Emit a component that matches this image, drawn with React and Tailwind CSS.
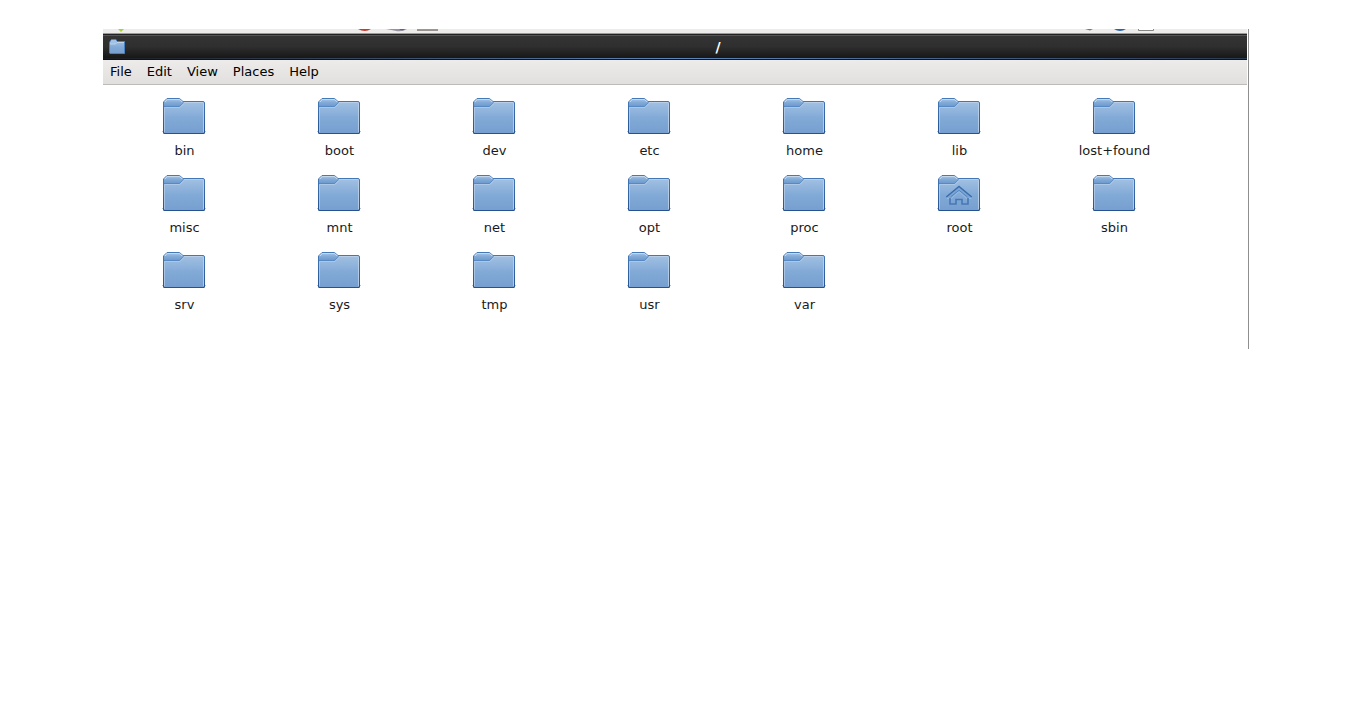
const menus = ['File', 'Edit', 'View', 'Places', 'Help'];

const folders = [
  'bin', 'boot', 'dev', 'etc', 'home', 'lib', 'lost+found',
  'misc', 'mnt', 'net', 'opt', 'proc', 'root', 'sbin',
  'srv', 'sys', 'tmp', 'usr', 'var',
];

function FolderDefs() {
  return (
    <svg className="absolute size-0" aria-hidden="true">
      <defs>
        <linearGradient id="body" x1="0" y1="0" x2="0" y2="1">
          <stop offset="0" stopColor="#a9c5e4" />
          <stop offset="0.55" stopColor="#82aad7" />
          <stop offset="1" stopColor="#769fd0" />
        </linearGradient>
        <linearGradient id="tab" x1="0" y1="0" x2="0" y2="1">
          <stop offset="0" stopColor="#a9c6e6" />
          <stop offset="0.4" stopColor="#86add8" />
          <stop offset="1" stopColor="#6a98cd" />
        </linearGradient>
        <linearGradient id="edge" x1="0" y1="0" x2="0" y2="1">
          <stop offset="0" stopColor="#457ab9" />
          <stop offset="1" stopColor="#265290" />
        </linearGradient>
      </defs>
    </svg>
  );
}

function FolderIcon({ home }) {
  return (
    <svg className="h-12 w-[47px]" viewBox="0 0 47 48" aria-hidden="true">
      <path d="M1 39.5H45" stroke="#b9c2cf" strokeWidth="1" />
      <path
        d="M2.5 41V10L6 6.5H18.500L22 9.5H42Q43.500 9.500 43.500 11V41Q43.500 41.500 43 41.500H3Q2.500 41.500 2.500 41Z"
        fill="url(#body)"
        stroke="url(#edge)"
      />
      <path d="M42.500 40V11.500Q42.500 10.500 41.500 10.500H23" fill="none" stroke="#bdd3ec" strokeOpacity="0.8" />
      <path d="M3 9.800L6 7H18.500L22.500 10L18.500 14.500H3Z" fill="url(#tab)" />
      <path d="M4 10L6.300 7.500H18.300L21 9.800" fill="none" stroke="#c4d8ee" />
      <path d="M3.500 40V15.500H19L23 11.500" fill="none" stroke="#b3cce9" strokeOpacity="0.8" />
      <path d="M3 14.500H18.500L22.500 10.300" fill="none" stroke="#4a7fbf" strokeOpacity="0.75" />
      {home && (
        <>
          <path d="M11 29.500H15.500L23 22.500L30.500 29.500H35.500" fill="none" stroke="#a9c6e6" strokeOpacity="0.6" />
          <path d="M10.800 28L23 17.800L35.200 28H31.500L23 21.300L14.500 28Z" fill="#7ba5d5" />
          <path d="M14.500 28L23 21.300L31.500 28" fill="none" stroke="#5585c0" />
          <path d="M10.300 28L23 17.500L35.700 28" fill="none" stroke="#3a6dac" strokeWidth="1.500" />
          <path d="M14 29V35H20V30.500H26V35H32V29" fill="none" stroke="#4778b5" strokeWidth="1.600" />
        </>
      )}
    </svg>
  );
}

function SmallFolder() {
  return (
    <svg className="size-4" viewBox="0 0 16 16" aria-hidden="true">
      <path d="M0.500 14V3.500L2.500 0.500H7L8 2.500H15.500V14.500H1Z" fill="url(#body)" stroke="#4a7fc0" />
      <path d="M1 3.500L2.500 1H6.500L8 2.500L6.500 4.500H1Z" fill="#a3c2e4" />
      <path d="M1 5H6.500L8 3.500H15" fill="none" stroke="#dbe8f6" strokeOpacity="0.6" />
    </svg>
  );
}

/* The lower edge of the desktop panel, with the bottoms of its launchers. */
function PanelEdge() {
  return (
    <div className="flex h-[5px] items-start justify-between overflow-hidden border-b border-[#9c9b99] bg-[#edeceb] pr-[91px] pl-[14px]">
      <div className="flex">
        <svg className="h-1 w-2" viewBox="0 0 8 4" aria-hidden="true">
          <path d="M1 0H7L4 3Z" fill="#a5d334" />
        </svg>
        <svg className="ml-[233px] h-1 w-[84px]" viewBox="0 0 84 4" aria-hidden="true">
          <path d="M0 0H13Q7 4 0 0Z" fill="#c93a2a" />
          <path d="M28 0H49Q44 3.500 37 1.800Z" fill="#98939f" />
          <path d="M41 0H47Q44 2.500 41 0Z" fill="#7b4f96" />
          <path d="M59 0.500H80" stroke="#c98a55" />
          <path d="M59 1.500H80" stroke="#97918f" />
        </svg>
      </div>
      <svg className="h-1 w-[72px]" viewBox="0 0 72 4" aria-hidden="true">
        <path d="M1 0H9L6 1.500Z" fill="#777" />
        <path d="M30 0H42Q36 4 30 0Z" fill="#2b62ae" />
        <path d="M54.500 0V1.500H69.500V0" fill="#fff" stroke="#858583" />
      </svg>
    </div>
  );
}

export default function App() {
  return (
    <div className="min-h-screen bg-white pt-[29px] pr-[111px] pl-[103px] font-['DejaVu_Sans',sans-serif] text-[13px] leading-5 text-[#1a1a1a]">
      <FolderDefs />
      <main className="border-r border-[#8f8f8f] pr-px pb-[34px]">
        <PanelEdge />
        <header>
          <div className="flex h-6 items-center border-t border-[#222] bg-linear-to-b from-[#343434] via-[#2f2f2f] to-[#171717] px-1.5 shadow-[inset_0_1px_0_#555]">
            <SmallFolder />
            <h1 className="flex-1 pl-[70px] text-center text-sm font-bold text-white">/</h1>
          </div>
          <div className="h-0.5 border-b border-[#101216] bg-linear-to-r from-[#1b1d22] via-[#5c86bb] to-[#2b3a52]" />
        </header>
        <nav className="flex h-[25px] items-center gap-[15px] border-b border-[#bdbbb8] bg-linear-to-b from-[#edeceb] to-[#e1e0de] px-[7px] text-black">
          {menus.map((name) => (
            <button key={name} type="button">{name}</button>
          ))}
        </nav>
        <ul className="grid grid-cols-[repeat(auto-fill,155px)] gap-y-2 pt-[7px] pl-1">
          {folders.map((name) => (
            <li key={name} className="flex justify-center">
              <button type="button" className="flex flex-col items-center">
                <FolderIcon home={name === 'root'} />
                <span className="pt-px">{name}</span>
              </button>
            </li>
          ))}
        </ul>
      </main>
    </div>
  );
}
